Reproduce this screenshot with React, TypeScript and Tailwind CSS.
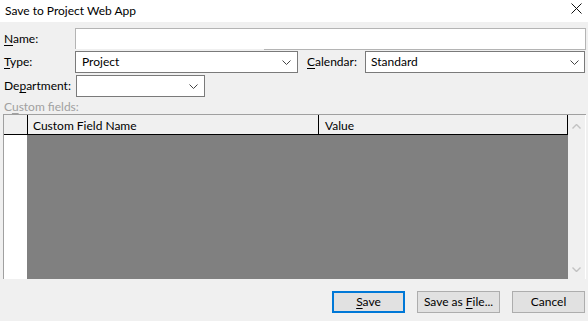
import React from "react";

const Chevron = ({ color = "#444" }: { color?: string }) => (
  <svg width="9" height="5" viewBox="0 0 9 5" className="block">
    <path d="M0.5 0.5 L4.5 4.5 L8.5 0.5" fill="none" stroke={color} strokeWidth="1" />
  </svg>
);

const ChevronUp = () => (
  <svg width="9" height="5" viewBox="0 0 9 5" className="block">
    <path d="M0.5 4.5 L4.5 0.5 L8.5 4.5" fill="none" stroke="#c2c2c2" strokeWidth="1.4" />
  </svg>
);

const ChevronDown = () => (
  <svg width="9" height="5" viewBox="0 0 9 5" className="block">
    <path d="M0.5 0.5 L4.5 4.5 L8.5 0.5" fill="none" stroke="#c2c2c2" strokeWidth="1.4" />
  </svg>
);

const U = ({ children }: { children: React.ReactNode }) => (
  <span className="underline underline-offset-2">{children}</span>
);

export default function App() {
  return (
    <div
      className="w-[588px] h-[321px] bg-[#f0f0f0] flex flex-col text-[12px] text-black overflow-hidden"
      style={{ fontFamily: 'Lato, "Noto Sans", sans-serif' }}
    >
      {/* Title bar */}
      <div className="h-[22px] bg-white flex items-center justify-between pl-[5px] pr-[6px] shrink-0">
        <span className="leading-none">Save to Project Web App</span>
        <svg width="11" height="11" viewBox="0 0 11 11" className="block -mt-[6px]">
          <path d="M0.5 0.5 L10.5 10.5 M10.5 0.5 L0.5 10.5" stroke="#111" strokeWidth="1" />
        </svg>
      </div>

      {/* Name row */}
      <div className="flex mt-[6px] h-[22px]">
        <div className="w-[75px] pl-[4px] flex items-center">
          <span><U>N</U>ame:</span>
        </div>
        <div className="w-[511px] flex flex-col">
          <div className="flex-1 bg-white border-t border-l border-r border-[#b4b4b4]" />
          <div className="h-px ml-[189px] bg-[#b4b4b4]" />
        </div>
      </div>

      {/* Type / Calendar row */}
      <div className="flex mt-[1px] h-[22px]">
        <div className="w-[75px] pl-[4px] flex items-center">
          <span><U>T</U>ype:</span>
        </div>
        <div className="w-[223px] bg-white border border-[#7a7a7a] flex items-center justify-between pl-[6px] pr-[6px]">
          <span>Project</span>
          <Chevron />
        </div>
        <div className="w-[67px] pl-[9px] flex items-center">
          <span><U>C</U>alendar:</span>
        </div>
        <div className="w-[220px] bg-white border border-[#7a7a7a] flex items-center justify-between pl-[5px] pr-[5px]">
          <span>Standard</span>
          <Chevron />
        </div>
      </div>

      {/* Department row */}
      <div className="flex mt-[2px] h-[22px]">
        <div className="w-[76px] pl-[4px] flex items-center">
          <span>De<U>p</U>artment:</span>
        </div>
        <div className="w-[129px] bg-white border border-[#7a7a7a] flex items-center justify-end pr-[6px]">
          <Chevron />
        </div>
      </div>

      {/* Custom fields label */}
      <div className="pl-[4px] mt-[2px] h-[15px] flex items-center text-[#a0a0a0]">
        <span>C<U>u</U>stom fields:</span>
      </div>

      {/* Grid */}
      <div className="ml-[3px] w-[583px] h-[165px] border-t border-l border-[#a0a0a0] flex">
        <div className="w-[564px] flex flex-col">
          {/* header */}
          <div className="h-[20px] flex border-b border-black shrink-0">
            <div className="w-[24px] border-r border-black" />
            <div className="w-[291px] border-r border-black flex items-center pl-[5px] pt-[3px]">
              Custom Field Name
            </div>
            <div className="w-[249px] border-r border-black flex items-center pl-[6px] pt-[3px]">
              Value
            </div>
          </div>
          {/* body */}
          <div className="flex-1 flex">
            <div className="w-[23px] bg-white" />
            <div className="flex-1 bg-[#808080]" />
          </div>
        </div>
        {/* scrollbar */}
        <div className="w-[18px] bg-[#f0f0f0] border-r border-white flex flex-col items-center justify-between pt-[9px] pb-[7px]">
          <ChevronUp />
          <ChevronDown />
        </div>
      </div>

      {/* Buttons */}
      <div className="flex justify-end gap-[12px] pr-[3px] mt-[12px]">
        <button className="w-[73px] h-[22px] bg-[#e1e1e1] border-2 border-[#0078d7] flex items-center justify-center">
          <span><U>S</U>ave</span>
        </button>
        <button className="w-[83px] h-[22px] bg-[#e1e1e1] border border-[#adadad] flex items-center justify-center">
          <span>Save as <U>F</U>ile...</span>
        </button>
        <button className="w-[73px] h-[22px] bg-[#e1e1e1] border border-[#adadad] flex items-center justify-center">
          <span>Cancel</span>
        </button>
      </div>
    </div>
  );
}
